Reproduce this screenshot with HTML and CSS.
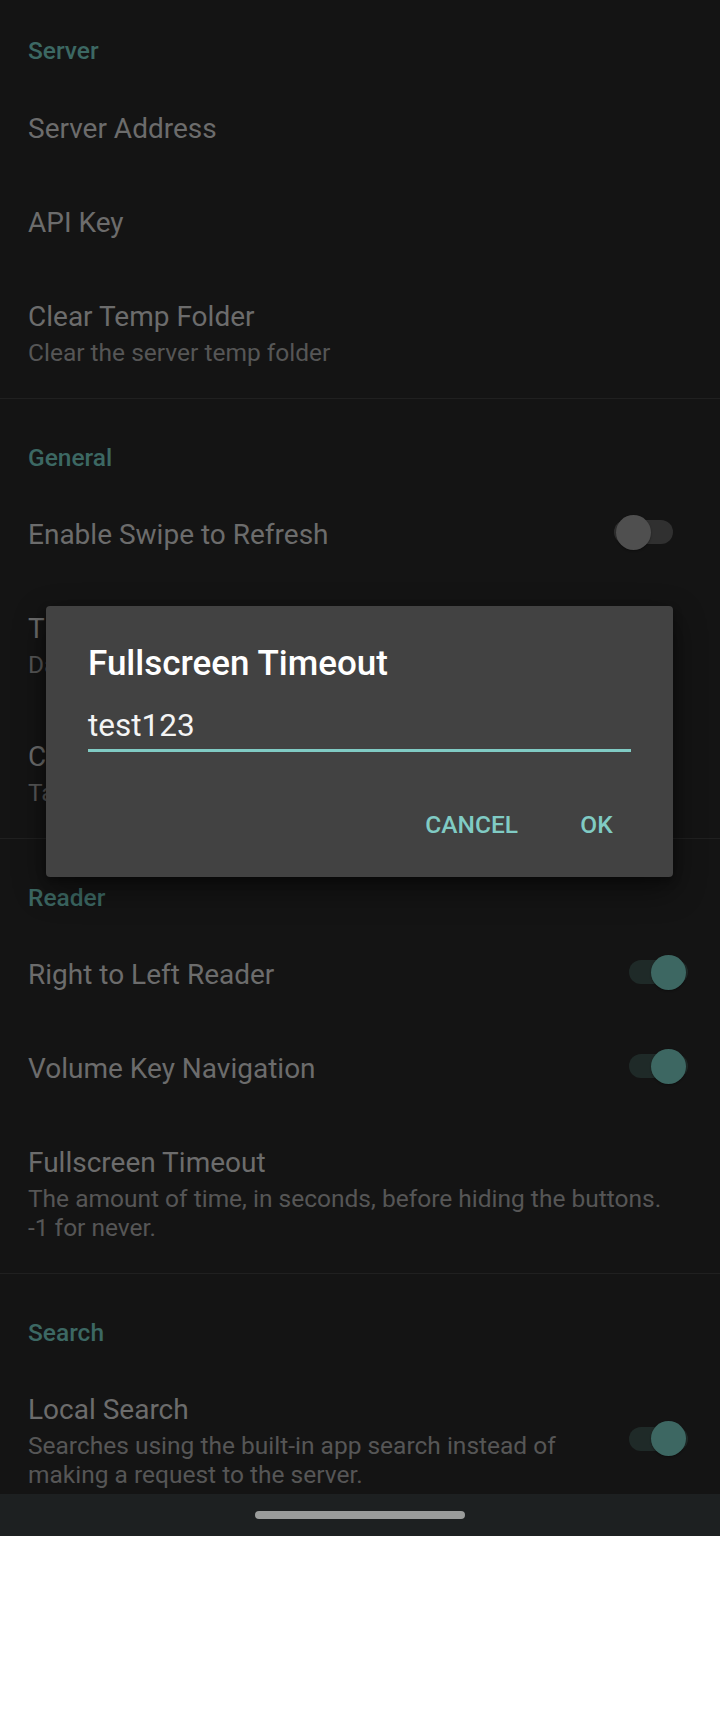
FILE: index.html
```html
<!DOCTYPE html>
<html lang="en">
<head>
<meta charset="utf-8">
<title>Settings</title>
<link rel="stylesheet" href="styles.css">
</head>
<body>
<div class="screen">
  <div class="list">
    <section class="category">
      <div class="cat-title cat-first">Server</div>
      <div class="pref"><div class="pref-text"><div class="pref-title">Server Address</div></div></div>
      <div class="pref"><div class="pref-text"><div class="pref-title">API Key</div></div></div>
      <div class="pref"><div class="pref-text"><div class="pref-title">Clear Temp Folder</div><div class="pref-summary">Clear the server temp folder</div></div></div>
    </section>
    <div class="divider"></div>
    <section class="category">
      <div class="cat-title">General</div>
      <div class="pref">
        <div class="pref-text"><div class="pref-title">Enable Swipe to Refresh</div></div>
        <div class="switch switch-wide"><div class="track"></div><div class="thumb"></div></div>
      </div>
      <div class="pref"><div class="pref-text"><div class="pref-title">Theme</div><div class="pref-summary">Dark</div></div></div>
      <div class="pref"><div class="pref-text"><div class="pref-title">Column Count</div><div class="pref-summary">Tap to change the number of columns</div></div></div>
    </section>
    <div class="divider"></div>
    <section class="category">
      <div class="cat-title">Reader</div>
      <div class="pref">
        <div class="pref-text"><div class="pref-title">Right to Left Reader</div></div>
        <div class="switch on"><div class="track"></div><div class="thumb"></div></div>
      </div>
      <div class="pref">
        <div class="pref-text"><div class="pref-title">Volume Key Navigation</div></div>
        <div class="switch on"><div class="track"></div><div class="thumb"></div></div>
      </div>
      <div class="pref"><div class="pref-text"><div class="pref-title">Fullscreen Timeout</div><div class="pref-summary">The amount of time, in seconds, before hiding the buttons.<br>-1 for never.</div></div></div>
    </section>
    <div class="divider"></div>
    <section class="category">
      <div class="cat-title">Search</div>
      <div class="pref">
        <div class="pref-text"><div class="pref-title">Local Search</div><div class="pref-summary">Searches using the built-in app search instead of making a request to the server.</div></div>
        <div class="switch on"><div class="track"></div><div class="thumb"></div></div>
      </div>
    </section>
  </div>
  <div class="navbar"><div class="handle"></div></div>

  <div class="dialog">
    <div class="dialog-title">Fullscreen Timeout</div>
    <div class="dialog-input">test123</div>
    <div class="dialog-buttons">
      <div class="dialog-btn">CANCEL</div>
      <div class="dialog-btn">OK</div>
    </div>
  </div>
</div>
</body>
</html>
```
FILE: styles.css
```css
html, body {
  margin: 0;
  padding: 0;
  background: #ffffff;
}

body {
  font-family: Roboto, "Noto Sans", "Liberation Sans", sans-serif;
}

.screen {
  position: relative;
  width: 720px;
  height: 1536px;
  display: flex;
  flex-direction: column;
  background: #141414;
  overflow: hidden;
}

.list {
  height: 1494px;
  overflow: hidden;
  flex: none;
}

.cat-title {
  padding: 44px 28px 16px 28px;
  font-size: 24.5px;
  line-height: 29px;
  font-weight: 500;
  color: #3c6863;
}

.cat-title.cat-first {
  padding-top: 36px;
  padding-bottom: 16.5px;
}

.pref {
  display: flex;
  align-items: center;
  padding: 30.5px 28px;
}

.pref-text {
  flex: 1;
  min-width: 0;
}

.pref-title {
  font-size: 28px;
  line-height: 33px;
  color: #6c6c6c;
}

.pref-summary {
  margin-top: 5px;
  font-size: 24.5px;
  line-height: 29px;
  color: #565656;
}

.divider {
  height: 1px;
  background: #202020;
}

.switch {
  position: relative;
  flex: none;
  width: 59px;
  height: 35px;
  margin: -7px 4px -2px 28px;
}

.switch.switch-wide {
  margin-right: 19px;
}

.track {
  position: absolute;
  left: 0;
  right: 0;
  top: 5.5px;
  height: 24px;
  border-radius: 12px;
  background: #303030;
}

.thumb {
  position: absolute;
  top: 0;
  left: 2px;
  width: 35px;
  height: 35px;
  border-radius: 50%;
  background: #4f4f4f;
  box-shadow: 0 1px 2px rgba(0, 0, 0, 0.35);
}

.switch.on .track {
  background: #1f2a28;
}

.switch.on .thumb {
  left: auto;
  right: 2px;
  background: #3d6762;
}

.navbar {
  height: 42px;
  flex: none;
  background: #1d2021;
  display: flex;
  align-items: center;
  justify-content: center;
}

.handle {
  width: 210px;
  height: 8px;
  border-radius: 4px;
  background: #9a9c9b;
}

.dialog {
  position: absolute;
  left: 46px;
  top: 606px;
  width: 627px;
  box-sizing: border-box;
  padding: 36.5px 42px 21px 42px;
  background: #424242;
  border-radius: 4px;
  box-shadow: 0 12px 32px rgba(0, 0, 0, 0.45), 0 4px 10px rgba(0, 0, 0, 0.3);
}

.dialog-title {
  font-size: 35px;
  line-height: 41px;
  font-weight: 500;
  color: #ffffff;
}

.dialog-input {
  margin-top: 23.25px;
  padding-bottom: 5.5px;
  font-size: 31.5px;
  line-height: 37px;
  color: #f4f4f4;
  border-bottom: 3px solid #80cbc4;
}

.dialog-buttons {
  margin-top: 41px;
  margin-right: -21.5px;
  display: flex;
  justify-content: flex-end;
  gap: 8.5px;
}

.dialog-btn {
  min-width: 112px;
  box-sizing: border-box;
  padding: 17px 14px;
  text-align: center;
  font-size: 24.5px;
  line-height: 29px;
  font-weight: 500;
  color: #80cbc4;
}
```
